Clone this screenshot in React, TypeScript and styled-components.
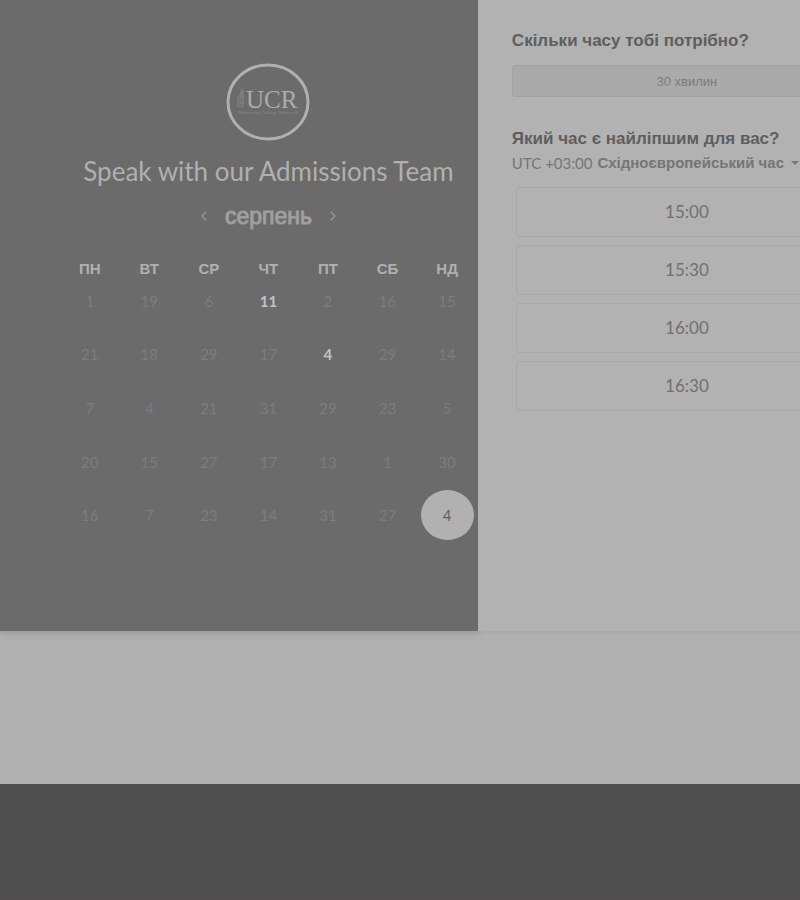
import React, { useState } from "react";
import styled, { createGlobalStyle } from "styled-components";
import { ChevronLeft, ChevronRight } from "lucide-react";

const sans = `"Liberation Sans", Arial, sans-serif`;
const display = `Lato, "Liberation Sans", sans-serif`;

const GlobalStyle = createGlobalStyle`
  *, *::before, *::after { box-sizing: border-box; }
  body { margin: 0; background: #b1b1b1; font-family: ${sans}; }
  button, select { font: inherit; color: inherit; margin: 0; }
`;

const Page = styled.div`
  display: flex;
  flex-direction: column;
  min-height: 100vh;
  overflow: hidden;
`;

const Booking = styled.main`
  display: grid;
  grid-template-columns: 8fr 7fr;
  width: 112%;
  min-height: 631px;
  margin-bottom: 153px;
  box-shadow: 0 1px 3px #a2a2a2;
`;

const CalendarPanel = styled.section`
  display: flex;
  flex-direction: column;
  align-items: center;
  padding: 62px 1px 88px 60px;
  background: #6b6b6b;
  color: #b0b0b0;
  box-shadow: 0 2px 8px #999;
`;

const Logo = styled.svg`
  display: block;
  width: 84px;
  height: 80px;
`;

const Title = styled.h1`
  margin: 12px 0 0;
  font: 400 26px/34px ${display};
  white-space: nowrap;
`;

const MonthBar = styled.div`
  display: flex;
  align-items: center;
  gap: 13px;
  margin-top: 12px;
`;

const Month = styled.h2`
  margin: 0;
  font: 400 23px/32px ${sans};
  -webkit-text-stroke: 1px #9c9c9c;
  color: #a5a5a5;
`;

const MonthButton = styled.button`
  display: flex;
  padding: 0;
  border: 0;
  background: none;
  color: #979797;
  cursor: pointer;
`;

const Calendar = styled.table`
  width: 100%;
  height: 278px;
  margin-top: 32px;
  table-layout: fixed;
  border-collapse: collapse;
`;

const Weekday = styled.th`
  height: 10px;
  padding: 0;
  font: 700 15px/10px ${sans};
`;

const DayCell = styled.td`
  padding: 0;
  text-align: center;
`;

type DayState = "past" | "open" | "selected";

const dayColor: Record<DayState, string> = {
  past: "#7d7d7d",
  open: "#c2c2c2",
  selected: "#606060",
};

const Day = styled.button<{ $state: DayState }>`
  width: 53px;
  height: 50px;
  padding: 0;
  border: 0;
  border-radius: 50%;
  background: ${({ $state }) => ($state === "selected" ? "#b1b1b1" : "none")};
  color: ${({ $state }) => dayColor[$state]};
  font: ${({ $state }) => ($state === "open" ? 700 : 400)} 15px/20px ${display};
  vertical-align: middle;
`;

const TimePanel = styled.section`
  padding: 30px 34px 24px;
  background: #b2b2b2;
  color: #5e5e5e;
`;

const Question = styled.h2`
  margin: 0;
  font: 700 17px/22px ${sans};
  color: #5e5e5e;
  white-space: nowrap;
`;

const Duration = styled.button`
  display: block;
  width: 100%;
  height: 32px;
  margin: 13px 0 31px;
  padding: 0;
  border: 1px solid #a2a2a2;
  border-radius: 3px;
  background: #aaaaaa;
  color: #7b7b7b;
  font-size: 13px;
`;

const Timezone = styled.button`
  display: flex;
  align-items: center;
  gap: 5px;
  margin-top: 3px;
  padding: 0;
  border: 0;
  background: none;
  color: #757575;
  font: 400 15px/20px ${display};
  white-space: nowrap;

  strong {
    font: 700 15px/20px ${sans};
  }
`;

const Caret = styled.svg`
  width: 8px;
  height: 4px;
  margin-left: 2px;
  fill: #777;
`;

const Slots = styled.ul`
  display: grid;
  gap: 8px;
  margin: 14px 4px 0;
  padding: 0;
  list-style: none;
`;

const Slot = styled.button`
  display: block;
  width: 100%;
  height: 50px;
  padding: 0;
  border: 1px solid #a8a8a8;
  border-radius: 3px;
  background: #b2b2b2;
  color: #707070;
  font: 400 17px/24px ${display};
`;

const Footer = styled.footer`
  flex: 1;
  min-height: 116px;
  background: #4f4f4f;
  border-bottom: 2px solid #534e50;
`;

const weekdays = ["ПН", "ВТ", "СР", "ЧТ", "ПТ", "СБ", "НД"];

const weeks = [
  [1, 19, 6, 11, 2, 16, 15],
  [21, 18, 29, 17, 4, 29, 14],
  [7, 4, 21, 31, 29, 23, 5],
  [20, 15, 27, 17, 13, 1, 30],
  [16, 7, 23, 14, 31, 27, 4],
];

const openDays = ["0-3", "1-4", "4-6"];
const times = ["15:00", "15:30", "16:00", "16:30"];

function SchoolLogo() {
  return (
    <Logo viewBox="0 0 84 80" role="img" aria-label="UCR">
      <ellipse cx="42" cy="40" rx="40" ry="37" fill="none" stroke="#b0b0b0" strokeWidth="3" />
      <path d="M11 45V35l3-2v-4l2-3 2 3v16z" fill="#7c7c7c" />
      <path d="M12 37h5M12 40h5M12 43h5" stroke="#6b6b6b" />
      <text x="20" y="46" fill="#acacac" fontFamily="Liberation Serif, serif" fontSize="25">
        UCR
      </text>
      <text x="13" y="52" fill="#8e8e8e" fontFamily="Liberation Serif, serif" fontSize="5">
        University College Roosevelt
      </text>
    </Logo>
  );
}

export default function App() {
  const [selected, setSelected] = useState("4-6");

  const stateOf = (key: string): DayState =>
    key === selected ? "selected" : openDays.includes(key) ? "open" : "past";

  return (
    <Page>
      <GlobalStyle />
      <Booking>
        <CalendarPanel>
          <SchoolLogo />
          <Title>Speak with our Admissions Team</Title>
          <MonthBar>
            <MonthButton aria-label="Попередній місяць">
              <ChevronLeft size={16} />
            </MonthButton>
            <Month>серпень</Month>
            <MonthButton aria-label="Наступний місяць">
              <ChevronRight size={16} />
            </MonthButton>
          </MonthBar>
          <Calendar>
            <thead>
              <tr>
                {weekdays.map((name) => (
                  <Weekday key={name} scope="col">{name}</Weekday>
                ))}
              </tr>
            </thead>
            <tbody>
              {weeks.map((week, row) => (
                <tr key={row}>
                  {week.map((day, column) => {
                    const key = `${row}-${column}`;
                    const state = stateOf(key);
                    return (
                      <DayCell key={key}>
                        <Day
                          $state={state}
                          disabled={state === "past"}
                          aria-pressed={state === "selected"}
                          onClick={() => setSelected(key)}
                        >
                          {day}
                        </Day>
                      </DayCell>
                    );
                  })}
                </tr>
              ))}
            </tbody>
          </Calendar>
        </CalendarPanel>
        <TimePanel>
          <Question>Скільки часу тобі потрібно?</Question>
          <Duration>30 хвилин</Duration>
          <Question>Який час є найліпшим для вас?</Question>
          <Timezone aria-haspopup="listbox">
            <span>UTC +03:00</span>
            <strong>Східноєвропейський час</strong>
            <Caret viewBox="0 0 8 4" aria-hidden="true">
              <path d="M0 0h8L4 4z" />
            </Caret>
          </Timezone>
          <Slots>
            {times.map((time) => (
              <li key={time}>
                <Slot>{time}</Slot>
              </li>
            ))}
          </Slots>
        </TimePanel>
      </Booking>
      <Footer />
    </Page>
  );
}
